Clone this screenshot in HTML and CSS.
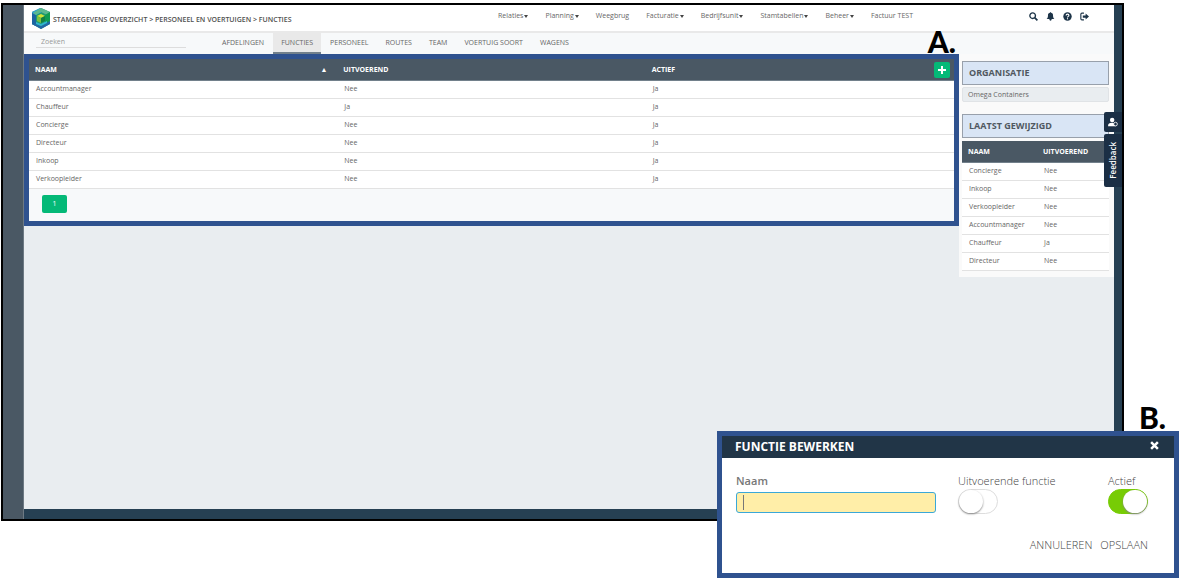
FILE: index.html
```html
<!DOCTYPE html>
<html lang="nl">
<head>
<meta charset="utf-8">
<title>Stamgegevens overzicht - Functies</title>
<link rel="stylesheet" href="styles.css">
</head>
<body>
<div class="app">
  <div class="rail"></div>
  <div class="main">
    <header class="topbar">
      <svg class="logo" viewBox="0 0 20 22" aria-hidden="true">
        <path fill="#1f9a72" d="M10 1l9 4v12l-9 5-9-5V5z"/>
        <path fill="#2f9fd0" d="M9 1L1 5v12l4 2V8l6-3z"/>
        <path fill="#1c64a0" d="M1 6l4 2v11l-4-2z"/>
        <path fill="#5cb88f" d="M10 1l9 4-3 3-6-3-5 3-3-2z"/>
        <path fill="#0f9c50" d="M19 5v9l-5 3V8z"/>
        <path fill="#2467a5" d="M5 17l5 2 9-5v3l-9 5-9-5z"/>
        <path fill="#2fb6d0" d="M5 15l5 2 6-3v2l-6 3-5-2z"/>
        <path fill="#d3e234" d="M10 7l4 2-4 2-4-2z"/>
        <path fill="#7ac143" d="M6 9l4 2v5l-4-2z"/>
        <path fill="#14803f" d="M14 9l-4 2v5l4-2z"/>
      </svg>
      <h1 class="crumbs">STAMGEGEVENS OVERZICHT &gt; PERSONEEL EN VOERTUIGEN &gt; FUNCTIES</h1>
      <nav class="menu">
        <a class="drop" href="#">Relaties</a>
        <a class="drop" href="#">Planning</a>
        <a href="#">Weegbrug</a>
        <a class="drop" href="#">Facturatie</a>
        <a class="drop" href="#">Bedrijfsunit</a>
        <a class="drop" href="#">Stamtabellen</a>
        <a class="drop" href="#">Beheer</a>
        <a href="#">Factuur TEST</a>
      </nav>
      <div class="tools">
        <button type="button" aria-label="Zoeken"><svg viewBox="0 0 16 16"><circle cx="6.5" cy="6.5" r="5" fill="none" stroke="currentColor" stroke-width="2.4"/><path d="M10 10l5 5" stroke="currentColor" stroke-width="3"/></svg></button>
        <button type="button" aria-label="Meldingen"><svg viewBox="0 0 16 16"><path fill="currentColor" d="M8 0l1.200 1.500C12 2.200 12.500 4 12.500 6.500c0 3 1 4.500 2.500 6H1c1.500-1.500 2.500-3 2.500-6 0-2.500.5-4.300 3.300-5zM6 12.500h4v1a2 2 0 0 1-4 0z"/></svg></button>
        <button type="button" aria-label="Help"><svg viewBox="0 0 16 16"><circle cx="8" cy="8" r="7.500" fill="currentColor"/><path d="M5.500 6.200c0-3.200 5-3 5-.2C10.500 7.800 8 7.700 8 9.800" fill="none" stroke="#fff" stroke-width="2"/><path d="M7 11h2v2H7z" fill="#fff"/></svg></button>
        <button type="button" aria-label="Uitloggen"><svg viewBox="0 0 16 16"><path d="M7 2H3.500Q1.500 2 1.500 4v8q0 2 2 2H7" fill="none" stroke="currentColor" stroke-width="2"/><path fill="currentColor" d="M5 6h5V2.500L16 8l-6 5.500V10H5z"/></svg></button>
      </div>
    </header>
    <div class="subbar">
      <input class="search" type="text" placeholder="Zoeken" aria-label="Zoeken">
      <nav class="tabs">
        <a href="#">AFDELINGEN</a>
        <a class="active" href="#">FUNCTIES</a>
        <a href="#">PERSONEEL</a>
        <a href="#">ROUTES</a>
        <a href="#">TEAM</a>
        <a href="#">VOERTUIG SOORT</a>
        <a href="#">WAGENS</a>
      </nav>
    </div>
    <div class="work">
      <section class="panel">
        <table class="grid">
          <thead><tr><th><span class="head">NAAM<span class="sort">▲</span></span></th><th>UITVOEREND</th><th class="end"><span class="head">ACTIEF<button class="add" type="button" aria-label="Toevoegen"><svg viewBox="0 0 8 8"><path fill="#fff" d="M3 0h2v3h3v2H5v3H3V5H0V3h3z"/></svg></button></span></th></tr></thead>
          <tbody>
            <tr><td>Accountmanager</td><td>Nee</td><td>Ja</td></tr>
            <tr><td>Chauffeur</td><td>Ja</td><td>Ja</td></tr>
            <tr><td>Concierge</td><td>Nee</td><td>Ja</td></tr>
            <tr><td>Directeur</td><td>Nee</td><td>Ja</td></tr>
            <tr><td>Inkoop</td><td>Nee</td><td>Ja</td></tr>
            <tr><td>Verkoopleider</td><td>Nee</td><td>Ja</td></tr>
          </tbody>
        </table>
        <div class="pager"><button type="button">1</button></div>
      </section>
      <aside class="side">
        <h2>ORGANISATIE</h2>
        <div class="org">Omega Containers</div>
        <h2>LAATST GEWIJZIGD</h2>
        <table class="grid recent">
          <thead><tr><th>NAAM</th><th>UITVOEREND</th></tr></thead>
          <tbody>
            <tr><td>Concierge</td><td>Nee</td></tr>
            <tr><td>Inkoop</td><td>Nee</td></tr>
            <tr><td>Verkoopleider</td><td>Nee</td></tr>
            <tr><td>Accountmanager</td><td>Nee</td></tr>
            <tr><td>Chauffeur</td><td>Ja</td></tr>
            <tr><td>Directeur</td><td>Nee</td></tr>
          </tbody>
        </table>
      </aside>
    </div>
  </div>
  <div class="edge"></div>
  <div class="feedback">
    <button class="person" type="button" aria-label="Contact"><svg viewBox="0 0 12 12"><circle cx="5" cy="3.500" r="2.700" fill="#fff"/><path fill="#fff" d="M0 11q0-4 5-4 3 0 4 4z"/><circle cx="9" cy="8.500" r="2.200" fill="#1b2f45" stroke="#fff"/></svg></button>
    <button class="text" type="button"><span>Feedback</span></button>
  </div>
</div>
<div class="mark mark-a">A.</div>
<div class="mark mark-b">B.</div>
<form class="dialog">
  <div class="dialog-head"><h2>FUNCTIE BEWERKEN</h2><button type="button" aria-label="Sluiten"><svg viewBox="0 0 8 8"><path d="M1 1l6 6M7 1L1 7" stroke="#fff" stroke-width="2.200"/></svg></button></div>
  <div class="fields">
    <div class="field name"><label for="naam">Naam</label><div class="box"><input id="naam" type="text"></div></div>
    <div class="field"><label for="uitv">Uitvoerende functie</label><input class="switch" id="uitv" type="checkbox"></div>
    <div class="field last"><label for="actief">Actief</label><input class="switch" id="actief" type="checkbox" checked></div>
  </div>
  <div class="actions"><button type="button">ANNULEREN</button><button type="button">OPSLAAN</button></div>
</form>
</body>
</html>
```
FILE: styles.css
```css
* { box-sizing: border-box; }
body {
  margin: 0;
  padding: 3px 64px 0 1px;
  position: relative;
  min-height: 100vh;
  background: #fff;
  color: #666;
  font: 7px/10px "Open Sans", sans-serif;
}
button {
  border: 0;
  padding: 0;
  background: none;
  color: inherit;
  font: inherit;
}
svg { display: block; }
a { color: inherit; text-decoration: none; }
h1, h2 { margin: 0; }

.app {
  position: relative;
  display: grid;
  grid-template-columns: 21px 1fr 8px;
  min-height: calc(100vh - 61px);
  border: 2px solid #000;
}
.rail { background: #4a5864; border-right: 1px solid #6d7983; }
.edge { background: #264053; }
.main {
  display: flex;
  flex-direction: column;
  background: #e9edf0;
  border-bottom: 10px solid #264053;
}

.topbar {
  display: flex;
  align-items: center;
  height: 28px;
  padding: 0 25px 0 7px;
  background: #fff;
  border-bottom: 2px solid #e9e9e9;
}
.logo { width: 20px; height: 22px; margin-right: 2px; }
.crumbs { font-size: 7px; font-weight: 600; color: #505050; padding-top: 3px; }
.menu { display: flex; gap: 17px; margin-left: auto; padding-bottom: 4px; }
.drop { display: flex; align-items: center; gap: 1px; }
.drop::after {
  content: "";
  border: 2px solid transparent;
  border-top: 3px solid #444;
  border-bottom: 0;
}
.tools { display: flex; gap: 8px; margin-left: 116px; padding-bottom: 3px; color: #1d3448; }
.tools svg { width: 9px; height: 9px; }

.subbar { display: flex; height: 21px; background: #f7f9fa; }
.search {
  width: 150px;
  height: 13px;
  margin: 2px 28px 0 12px;
  padding: 0 5px;
  border: 0;
  border-bottom: 1px solid #ddd;
  background: none;
  font: inherit;
}
.search::placeholder { color: #999; }
.tabs { display: flex; gap: 1px; }
.tabs a { padding: 5px 8px 0; border-bottom: 2px solid transparent; }
.tabs .active { background: #e9e9e9; border-color: #72808b; }

.work { display: flex; align-items: flex-start; }
.panel { flex: 1; border: 5px solid #2f528f; background: #f7f9fa; }
.grid {
  width: 100%;
  table-layout: fixed;
  border-collapse: collapse;
  background: #fff;
}
.grid th {
  height: 21px;
  padding: 1px 6px 0;
  background: #4a5864;
  border-bottom: 1px solid #72808b;
  color: #fff;
  text-align: left;
  font-weight: 700;
}
.grid .end { padding-right: 4px; }
.grid td { height: 18px; padding: 0 7px 1px; border-bottom: 1px solid #e2e2e2; }
.head { display: flex; align-items: center; justify-content: space-between; }
.sort { padding-right: 4px; }
.add {
  width: 16px;
  height: 16px;
  padding: 4px;
  border-radius: 2px;
  background: #04b977;
}
.pager { padding: 6px 13px 8px; }
.pager button {
  width: 25px;
  height: 18px;
  border-radius: 2px;
  background: #04b977;
  color: #fff;
}

.side { width: 155px; padding: 7px 5px 6px 3px; background: #fafafa; }
.side h2 {
  height: 24px;
  padding: 0 6px;
  border: 1px solid #98a0ab;
  background: #d9e5f5;
  color: #505860;
  font-size: 9px;
  line-height: 22px;
}
.org {
  height: 15px;
  margin: 2px 0 12px;
  padding: 0 5px;
  border: 1px solid #e0e3e6;
  border-radius: 2px;
  background: #e9edf0;
  line-height: 13px;
}
.recent { margin-top: 3px; }
.recent th:first-child { width: 75px; }
.recent td { padding-bottom: 0; }

.feedback {
  position: absolute;
  top: 107px;
  right: 0;
  width: 18px;
  display: grid;
  gap: 2px;
  color: #fff;
}
.feedback button {
  display: grid;
  place-items: center;
  border-radius: 2px 0 0 2px;
  background: #1b2f45;
}
.person { height: 20px; }
.person svg { width: 10px; height: 10px; }
.feedback .text { height: 53px; font-size: 8px; font-weight: 600; }
.text span { writing-mode: vertical-rl; transform: rotate(180deg); }

.mark {
  position: absolute;
  color: #000;
  font: 900 30px/36px Lato, sans-serif;
}
.mark-a { top: 23px; right: 232px; }
.mark-b { top: 399px; right: 22px; }

.dialog {
  position: absolute;
  top: 431px;
  right: 9px;
  width: 462px;
  border: 5px solid #2f528f;
  background: #fff;
  font-size: 11px;
  line-height: 16px;
  font-weight: 300;
  color: #444;
}
.dialog-head {
  display: flex;
  align-items: center;
  justify-content: space-between;
  height: 22px;
  padding: 0 15px 0 13px;
  background: #213547;
  color: #fff;
}
.dialog-head h2 { font-size: 12px; }
.dialog-head svg { width: 9px; height: 9px; margin-bottom: 4px; }
.fields { display: flex; gap: 22px; padding: 15px 26px 0 14px; }
.field { display: flex; flex-direction: column; align-items: flex-start; }
.name { width: 200px; font-weight: 600; color: #777; }
.last { margin-left: auto; }
.box {
  display: flex;
  align-items: center;
  width: 100%;
  height: 21px;
  margin-top: 3px;
  padding-left: 6px;
  border: 1px solid #3aa8d8;
  border-radius: 3px;
  background: #ffeea8;
}
.box::before { content: ""; width: 1px; height: 15px; background: #777; }
.box input { flex: 1; min-width: 0; border: 0; background: none; font: inherit; outline: 0; }
.switch {
  appearance: none;
  display: flex;
  width: 40px;
  height: 25px;
  margin: 0;
  border: 1px solid #ddd;
  border-radius: 13px;
}
.switch::before {
  content: "";
  width: 24px;
  height: 23px;
  border-radius: 12px;
  background: #fff;
  box-shadow: 0 1px 2px #888;
}
.switch:checked { justify-content: flex-end; background: #77cc05; border-color: #77cc05; }
.actions { display: flex; justify-content: flex-end; gap: 8px; padding: 23px 26px 20px; }
```
